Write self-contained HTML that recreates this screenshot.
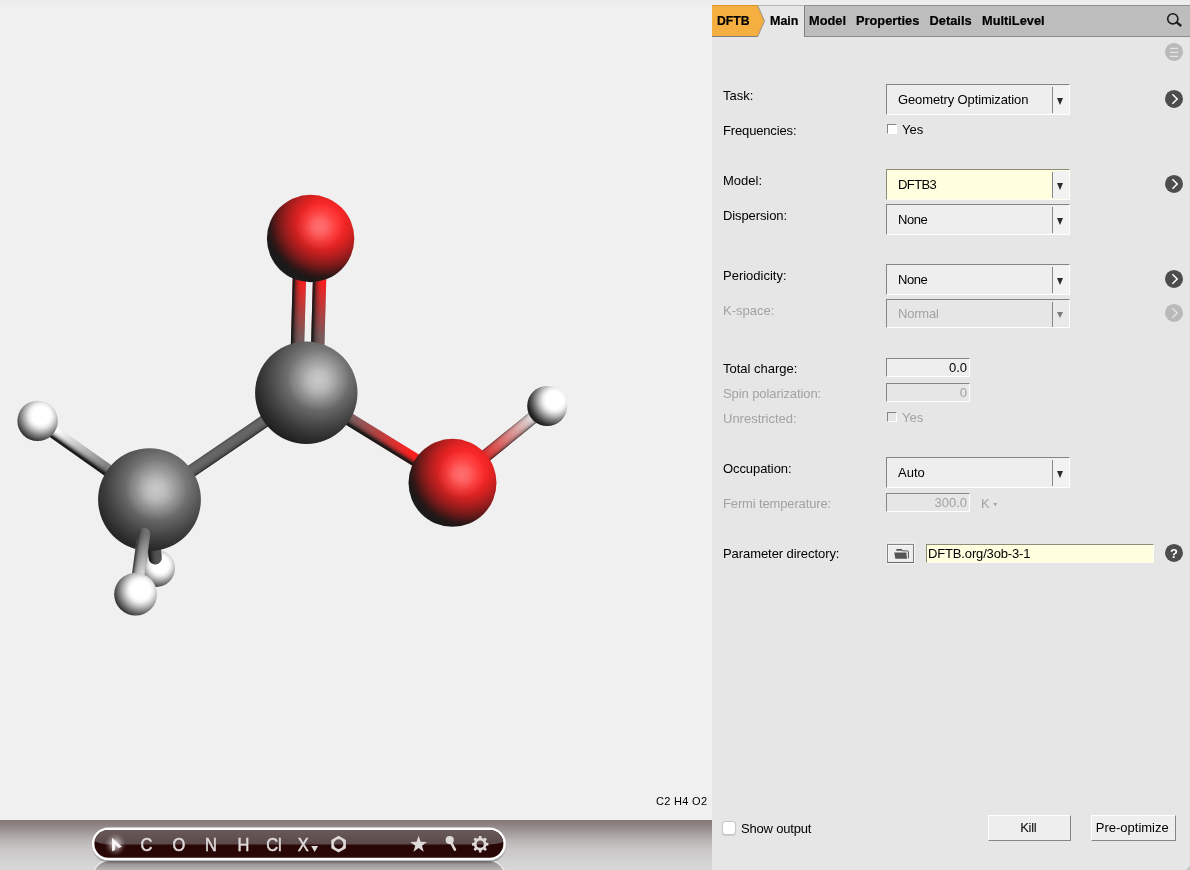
<!DOCTYPE html>
<html><head><meta charset="utf-8"><title>AMSinput</title>
<style>
*{box-sizing:border-box;margin:0;padding:0}
html,body{width:1190px;height:870px;overflow:hidden}
body{position:relative;background:#f0f0f0;font-family:"Liberation Sans",sans-serif;font-size:13px;color:#000;line-height:16px}
.abs,.abs *{position:absolute}
#left{will-change:transform;position:absolute;left:0;top:0;width:712px;height:870px;background:#f0f0f0}
#right{will-change:transform;position:absolute;left:712px;top:0;width:478px;height:870px;background:#e6e6e6}
#topband{position:absolute;left:0;top:0;width:478px;height:5px;background:#ecedec}
#tabbar{position:absolute;left:0;top:5px;width:478px;height:32px;background:#bdbdbd;border-top:1px solid #8e8e8e;border-bottom:1px solid #8a8a8a}
#tabmain{position:absolute;left:0;top:5px;width:93px;height:32px;background:#e6e6e6;border-right:1px solid #808080;border-top:1px solid #b6b6b6}
.tab{position:absolute;top:13px;font-weight:bold;-webkit-text-stroke:0.2px #000;font-size:12.3px;white-space:nowrap;line-height:16px}
.lbl{position:absolute;left:11px;white-space:nowrap;line-height:16px}
.dis{color:#a2a2a2}
.dd{position:absolute;left:174px;width:184px;height:31px;background:#eeeeee;border:1px solid;border-color:#858585 #fff #fff #858585}
.dd .t{position:absolute;left:11px;top:7px;white-space:nowrap}
.dd .sep{position:absolute;left:165px;top:2px;width:1px;height:26px;background:#858585}
.dd .bx{position:absolute;left:166px;top:1px;width:16px;height:28px;background:#f2f2f2}
.dd .ar{position:absolute;left:169.6px;top:13px;width:0;height:0;border-left:3.9px solid transparent;border-right:3.9px solid transparent;border-top:7px solid #2c2c2c}
.dd.y{background:#ffffdf;border-color:#8c8c78 #fffff2 #fffff2 #8c8c78}
.inp{position:absolute;left:174px;width:84px;height:19px;background:#eeeeee;border:1px solid;border-color:#858585 #fff #fff #858585;text-align:right;padding-right:2px;line-height:17px}
.cb{position:absolute;left:175px;width:10px;height:10px;background:#fff;border:1px solid;border-color:#858585 #fff #fff #858585}
.btn{position:absolute;top:815px;height:26px;background:#eeeeee;border:1px solid;border-color:#fff #858585 #858585 #fff;text-align:center;line-height:24px}
</style></head><body>
<div id="left">
<div style="position:absolute;left:0;top:0;width:712px;height:5px;background:#ecedec"></div>
<svg id="mol" width="712" height="820" viewBox="0 0 712 820" style="position:absolute;left:0;top:0"><defs><radialGradient id="sd1" gradientUnits="userSpaceOnUse" cx="160.1" cy="564.7" r="26.8"><stop offset="0.000" stop-color="#ffffff"/><stop offset="0.300" stop-color="#ffffff"/><stop offset="0.400" stop-color="#f0f0f0"/><stop offset="0.500" stop-color="#cecece"/><stop offset="0.600" stop-color="#a6a6a6"/><stop offset="0.690" stop-color="#808080"/><stop offset="0.790" stop-color="#585858"/><stop offset="0.870" stop-color="#383838"/><stop offset="0.960" stop-color="#1e1e1e"/><stop offset="1.000" stop-color="#1a1a1a"/></radialGradient><linearGradient id="bc1" gradientUnits="userSpaceOnUse" x1="149.50" y1="499.60" x2="155.30" y2="558.00"><stop offset="0.000" stop-color="#505050"/><stop offset="1.000" stop-color="#606060"/></linearGradient><linearGradient id="bs1" gradientUnits="userSpaceOnUse" x1="158.87" y1="528.16" x2="145.93" y2="529.44"><stop offset="0.000" stop-color="#1a1a1a" stop-opacity="0.290"/><stop offset="0.042" stop-color="#1a1a1a" stop-opacity="0.173"/><stop offset="0.083" stop-color="#1a1a1a" stop-opacity="0.168"/><stop offset="0.125" stop-color="#1a1a1a" stop-opacity="0.166"/><stop offset="0.167" stop-color="#1a1a1a" stop-opacity="0.166"/><stop offset="0.208" stop-color="#1a1a1a" stop-opacity="0.167"/><stop offset="0.250" stop-color="#1a1a1a" stop-opacity="0.169"/><stop offset="0.292" stop-color="#1a1a1a" stop-opacity="0.172"/><stop offset="0.333" stop-color="#1a1a1a" stop-opacity="0.175"/><stop offset="0.375" stop-color="#1a1a1a" stop-opacity="0.194"/><stop offset="0.417" stop-color="#1a1a1a" stop-opacity="0.219"/><stop offset="0.458" stop-color="#1a1a1a" stop-opacity="0.247"/><stop offset="0.500" stop-color="#1a1a1a" stop-opacity="0.278"/><stop offset="0.542" stop-color="#1a1a1a" stop-opacity="0.312"/><stop offset="0.583" stop-color="#1a1a1a" stop-opacity="0.358"/><stop offset="0.625" stop-color="#1a1a1a" stop-opacity="0.412"/><stop offset="0.667" stop-color="#1a1a1a" stop-opacity="0.469"/><stop offset="0.708" stop-color="#1a1a1a" stop-opacity="0.546"/><stop offset="0.750" stop-color="#1a1a1a" stop-opacity="0.636"/><stop offset="0.792" stop-color="#1a1a1a" stop-opacity="0.737"/><stop offset="0.833" stop-color="#1a1a1a" stop-opacity="0.854"/><stop offset="0.875" stop-color="#1a1a1a" stop-opacity="0.951"/><stop offset="0.917" stop-color="#1a1a1a" stop-opacity="1.000"/><stop offset="0.958" stop-color="#1a1a1a" stop-opacity="1.000"/><stop offset="1.000" stop-color="#1a1a1a" stop-opacity="1.000"/></linearGradient><linearGradient id="bc2" gradientUnits="userSpaceOnUse" x1="300.50" y1="238.22" x2="296.20" y2="392.52"><stop offset="0.280" stop-color="#ff2020"/><stop offset="0.640" stop-color="#7a5c5c"/></linearGradient><linearGradient id="bs2" gradientUnits="userSpaceOnUse" x1="307.20" y1="238.41" x2="293.81" y2="238.03"><stop offset="0.000" stop-color="#1a1a1a" stop-opacity="0.221"/><stop offset="0.042" stop-color="#1a1a1a" stop-opacity="0.062"/><stop offset="0.083" stop-color="#1a1a1a" stop-opacity="0.029"/><stop offset="0.125" stop-color="#1a1a1a" stop-opacity="0.026"/><stop offset="0.167" stop-color="#1a1a1a" stop-opacity="0.025"/><stop offset="0.208" stop-color="#1a1a1a" stop-opacity="0.025"/><stop offset="0.250" stop-color="#1a1a1a" stop-opacity="0.027"/><stop offset="0.292" stop-color="#1a1a1a" stop-opacity="0.029"/><stop offset="0.333" stop-color="#1a1a1a" stop-opacity="0.043"/><stop offset="0.375" stop-color="#1a1a1a" stop-opacity="0.065"/><stop offset="0.417" stop-color="#1a1a1a" stop-opacity="0.090"/><stop offset="0.458" stop-color="#1a1a1a" stop-opacity="0.119"/><stop offset="0.500" stop-color="#1a1a1a" stop-opacity="0.151"/><stop offset="0.542" stop-color="#1a1a1a" stop-opacity="0.186"/><stop offset="0.583" stop-color="#1a1a1a" stop-opacity="0.234"/><stop offset="0.625" stop-color="#1a1a1a" stop-opacity="0.291"/><stop offset="0.667" stop-color="#1a1a1a" stop-opacity="0.352"/><stop offset="0.708" stop-color="#1a1a1a" stop-opacity="0.426"/><stop offset="0.750" stop-color="#1a1a1a" stop-opacity="0.525"/><stop offset="0.792" stop-color="#1a1a1a" stop-opacity="0.634"/><stop offset="0.833" stop-color="#1a1a1a" stop-opacity="0.761"/><stop offset="0.875" stop-color="#1a1a1a" stop-opacity="0.906"/><stop offset="0.917" stop-color="#1a1a1a" stop-opacity="0.975"/><stop offset="0.958" stop-color="#1a1a1a" stop-opacity="1.000"/><stop offset="1.000" stop-color="#1a1a1a" stop-opacity="1.000"/></linearGradient><linearGradient id="bc3" gradientUnits="userSpaceOnUse" x1="320.70" y1="238.78" x2="316.40" y2="393.08"><stop offset="0.280" stop-color="#ff2020"/><stop offset="0.640" stop-color="#7a5c5c"/></linearGradient><linearGradient id="bs3" gradientUnits="userSpaceOnUse" x1="327.39" y1="238.97" x2="314.00" y2="238.59"><stop offset="0.000" stop-color="#1a1a1a" stop-opacity="0.221"/><stop offset="0.042" stop-color="#1a1a1a" stop-opacity="0.062"/><stop offset="0.083" stop-color="#1a1a1a" stop-opacity="0.029"/><stop offset="0.125" stop-color="#1a1a1a" stop-opacity="0.026"/><stop offset="0.167" stop-color="#1a1a1a" stop-opacity="0.025"/><stop offset="0.208" stop-color="#1a1a1a" stop-opacity="0.025"/><stop offset="0.250" stop-color="#1a1a1a" stop-opacity="0.027"/><stop offset="0.292" stop-color="#1a1a1a" stop-opacity="0.029"/><stop offset="0.333" stop-color="#1a1a1a" stop-opacity="0.043"/><stop offset="0.375" stop-color="#1a1a1a" stop-opacity="0.065"/><stop offset="0.417" stop-color="#1a1a1a" stop-opacity="0.090"/><stop offset="0.458" stop-color="#1a1a1a" stop-opacity="0.119"/><stop offset="0.500" stop-color="#1a1a1a" stop-opacity="0.151"/><stop offset="0.542" stop-color="#1a1a1a" stop-opacity="0.186"/><stop offset="0.583" stop-color="#1a1a1a" stop-opacity="0.234"/><stop offset="0.625" stop-color="#1a1a1a" stop-opacity="0.291"/><stop offset="0.667" stop-color="#1a1a1a" stop-opacity="0.352"/><stop offset="0.708" stop-color="#1a1a1a" stop-opacity="0.426"/><stop offset="0.750" stop-color="#1a1a1a" stop-opacity="0.525"/><stop offset="0.792" stop-color="#1a1a1a" stop-opacity="0.634"/><stop offset="0.833" stop-color="#1a1a1a" stop-opacity="0.761"/><stop offset="0.875" stop-color="#1a1a1a" stop-opacity="0.906"/><stop offset="0.917" stop-color="#1a1a1a" stop-opacity="0.975"/><stop offset="0.958" stop-color="#1a1a1a" stop-opacity="1.000"/><stop offset="1.000" stop-color="#1a1a1a" stop-opacity="1.000"/></linearGradient><linearGradient id="bc4" gradientUnits="userSpaceOnUse" x1="149.50" y1="499.60" x2="306.30" y2="392.80"><stop offset="0.000" stop-color="#727272"/><stop offset="1.000" stop-color="#727272"/></linearGradient><linearGradient id="bs4" gradientUnits="userSpaceOnUse" x1="145.95" y1="494.39" x2="153.05" y2="504.81"><stop offset="0.000" stop-color="#1a1a1a" stop-opacity="0.703"/><stop offset="0.042" stop-color="#1a1a1a" stop-opacity="0.379"/><stop offset="0.083" stop-color="#1a1a1a" stop-opacity="0.294"/><stop offset="0.125" stop-color="#1a1a1a" stop-opacity="0.237"/><stop offset="0.167" stop-color="#1a1a1a" stop-opacity="0.197"/><stop offset="0.208" stop-color="#1a1a1a" stop-opacity="0.175"/><stop offset="0.250" stop-color="#1a1a1a" stop-opacity="0.159"/><stop offset="0.292" stop-color="#1a1a1a" stop-opacity="0.148"/><stop offset="0.333" stop-color="#1a1a1a" stop-opacity="0.141"/><stop offset="0.375" stop-color="#1a1a1a" stop-opacity="0.138"/><stop offset="0.417" stop-color="#1a1a1a" stop-opacity="0.139"/><stop offset="0.458" stop-color="#1a1a1a" stop-opacity="0.143"/><stop offset="0.500" stop-color="#1a1a1a" stop-opacity="0.151"/><stop offset="0.542" stop-color="#1a1a1a" stop-opacity="0.162"/><stop offset="0.583" stop-color="#1a1a1a" stop-opacity="0.176"/><stop offset="0.625" stop-color="#1a1a1a" stop-opacity="0.193"/><stop offset="0.667" stop-color="#1a1a1a" stop-opacity="0.219"/><stop offset="0.708" stop-color="#1a1a1a" stop-opacity="0.253"/><stop offset="0.750" stop-color="#1a1a1a" stop-opacity="0.293"/><stop offset="0.792" stop-color="#1a1a1a" stop-opacity="0.339"/><stop offset="0.833" stop-color="#1a1a1a" stop-opacity="0.394"/><stop offset="0.875" stop-color="#1a1a1a" stop-opacity="0.481"/><stop offset="0.917" stop-color="#1a1a1a" stop-opacity="0.592"/><stop offset="0.958" stop-color="#1a1a1a" stop-opacity="0.748"/><stop offset="1.000" stop-color="#1a1a1a" stop-opacity="0.997"/></linearGradient><linearGradient id="bc5" gradientUnits="userSpaceOnUse" x1="306.30" y1="392.80" x2="452.50" y2="482.80"><stop offset="0.300" stop-color="#7d5f5f"/><stop offset="0.700" stop-color="#ff2020"/></linearGradient><linearGradient id="bs5" gradientUnits="userSpaceOnUse" x1="309.71" y1="387.26" x2="302.89" y2="398.34"><stop offset="0.000" stop-color="#1a1a1a" stop-opacity="0.048"/><stop offset="0.042" stop-color="#1a1a1a" stop-opacity="0.008"/><stop offset="0.083" stop-color="#1a1a1a" stop-opacity="0.004"/><stop offset="0.125" stop-color="#1a1a1a" stop-opacity="0.003"/><stop offset="0.167" stop-color="#1a1a1a" stop-opacity="0.005"/><stop offset="0.208" stop-color="#1a1a1a" stop-opacity="0.008"/><stop offset="0.250" stop-color="#1a1a1a" stop-opacity="0.012"/><stop offset="0.292" stop-color="#1a1a1a" stop-opacity="0.017"/><stop offset="0.333" stop-color="#1a1a1a" stop-opacity="0.022"/><stop offset="0.375" stop-color="#1a1a1a" stop-opacity="0.029"/><stop offset="0.417" stop-color="#1a1a1a" stop-opacity="0.062"/><stop offset="0.458" stop-color="#1a1a1a" stop-opacity="0.105"/><stop offset="0.500" stop-color="#1a1a1a" stop-opacity="0.151"/><stop offset="0.542" stop-color="#1a1a1a" stop-opacity="0.200"/><stop offset="0.583" stop-color="#1a1a1a" stop-opacity="0.272"/><stop offset="0.625" stop-color="#1a1a1a" stop-opacity="0.348"/><stop offset="0.667" stop-color="#1a1a1a" stop-opacity="0.438"/><stop offset="0.708" stop-color="#1a1a1a" stop-opacity="0.555"/><stop offset="0.750" stop-color="#1a1a1a" stop-opacity="0.682"/><stop offset="0.792" stop-color="#1a1a1a" stop-opacity="0.827"/><stop offset="0.833" stop-color="#1a1a1a" stop-opacity="0.943"/><stop offset="0.875" stop-color="#1a1a1a" stop-opacity="1.000"/><stop offset="0.917" stop-color="#1a1a1a" stop-opacity="1.000"/><stop offset="0.958" stop-color="#1a1a1a" stop-opacity="1.000"/><stop offset="1.000" stop-color="#1a1a1a" stop-opacity="1.000"/></linearGradient><linearGradient id="bc6" gradientUnits="userSpaceOnUse" x1="452.50" y1="482.80" x2="547.20" y2="406.00"><stop offset="0.300" stop-color="#ff2020"/><stop offset="0.850" stop-color="#ffffff"/></linearGradient><linearGradient id="bs6" gradientUnits="userSpaceOnUse" x1="448.56" y1="477.95" x2="456.44" y2="487.65"><stop offset="0.000" stop-color="#1a1a1a" stop-opacity="0.799"/><stop offset="0.042" stop-color="#1a1a1a" stop-opacity="0.453"/><stop offset="0.083" stop-color="#1a1a1a" stop-opacity="0.349"/><stop offset="0.125" stop-color="#1a1a1a" stop-opacity="0.287"/><stop offset="0.167" stop-color="#1a1a1a" stop-opacity="0.240"/><stop offset="0.208" stop-color="#1a1a1a" stop-opacity="0.204"/><stop offset="0.250" stop-color="#1a1a1a" stop-opacity="0.183"/><stop offset="0.292" stop-color="#1a1a1a" stop-opacity="0.168"/><stop offset="0.333" stop-color="#1a1a1a" stop-opacity="0.157"/><stop offset="0.375" stop-color="#1a1a1a" stop-opacity="0.151"/><stop offset="0.417" stop-color="#1a1a1a" stop-opacity="0.147"/><stop offset="0.458" stop-color="#1a1a1a" stop-opacity="0.147"/><stop offset="0.500" stop-color="#1a1a1a" stop-opacity="0.151"/><stop offset="0.542" stop-color="#1a1a1a" stop-opacity="0.158"/><stop offset="0.583" stop-color="#1a1a1a" stop-opacity="0.168"/><stop offset="0.625" stop-color="#1a1a1a" stop-opacity="0.181"/><stop offset="0.667" stop-color="#1a1a1a" stop-opacity="0.198"/><stop offset="0.708" stop-color="#1a1a1a" stop-opacity="0.226"/><stop offset="0.750" stop-color="#1a1a1a" stop-opacity="0.260"/><stop offset="0.792" stop-color="#1a1a1a" stop-opacity="0.301"/><stop offset="0.833" stop-color="#1a1a1a" stop-opacity="0.350"/><stop offset="0.875" stop-color="#1a1a1a" stop-opacity="0.415"/><stop offset="0.917" stop-color="#1a1a1a" stop-opacity="0.517"/><stop offset="0.958" stop-color="#1a1a1a" stop-opacity="0.659"/><stop offset="1.000" stop-color="#1a1a1a" stop-opacity="0.963"/></linearGradient><linearGradient id="bc7" gradientUnits="userSpaceOnUse" x1="37.60" y1="420.90" x2="149.50" y2="499.60"><stop offset="0.150" stop-color="#ffffff"/><stop offset="0.600" stop-color="#828282"/></linearGradient><linearGradient id="bs7" gradientUnits="userSpaceOnUse" x1="41.20" y1="415.79" x2="34.00" y2="426.01"><stop offset="0.000" stop-color="#1a1a1a" stop-opacity="0.040"/><stop offset="0.042" stop-color="#1a1a1a" stop-opacity="0.007"/><stop offset="0.083" stop-color="#1a1a1a" stop-opacity="0.003"/><stop offset="0.125" stop-color="#1a1a1a" stop-opacity="0.002"/><stop offset="0.167" stop-color="#1a1a1a" stop-opacity="0.004"/><stop offset="0.208" stop-color="#1a1a1a" stop-opacity="0.007"/><stop offset="0.250" stop-color="#1a1a1a" stop-opacity="0.011"/><stop offset="0.292" stop-color="#1a1a1a" stop-opacity="0.016"/><stop offset="0.333" stop-color="#1a1a1a" stop-opacity="0.022"/><stop offset="0.375" stop-color="#1a1a1a" stop-opacity="0.028"/><stop offset="0.417" stop-color="#1a1a1a" stop-opacity="0.061"/><stop offset="0.458" stop-color="#1a1a1a" stop-opacity="0.104"/><stop offset="0.500" stop-color="#1a1a1a" stop-opacity="0.151"/><stop offset="0.542" stop-color="#1a1a1a" stop-opacity="0.201"/><stop offset="0.583" stop-color="#1a1a1a" stop-opacity="0.273"/><stop offset="0.625" stop-color="#1a1a1a" stop-opacity="0.350"/><stop offset="0.667" stop-color="#1a1a1a" stop-opacity="0.443"/><stop offset="0.708" stop-color="#1a1a1a" stop-opacity="0.561"/><stop offset="0.750" stop-color="#1a1a1a" stop-opacity="0.689"/><stop offset="0.792" stop-color="#1a1a1a" stop-opacity="0.835"/><stop offset="0.833" stop-color="#1a1a1a" stop-opacity="0.946"/><stop offset="0.875" stop-color="#1a1a1a" stop-opacity="1.000"/><stop offset="0.917" stop-color="#1a1a1a" stop-opacity="1.000"/><stop offset="0.958" stop-color="#1a1a1a" stop-opacity="1.000"/><stop offset="1.000" stop-color="#1a1a1a" stop-opacity="1.000"/></linearGradient><radialGradient id="sd2" gradientUnits="userSpaceOnUse" cx="324.6" cy="221.5" r="65.6"><stop offset="0.000" stop-color="#ff2c2c"/><stop offset="0.200" stop-color="#fd2a2a"/><stop offset="0.300" stop-color="#f42626"/><stop offset="0.400" stop-color="#e02222"/><stop offset="0.480" stop-color="#c82020"/><stop offset="0.550" stop-color="#b01e1e"/><stop offset="0.620" stop-color="#961c1c"/><stop offset="0.680" stop-color="#7c1a1a"/><stop offset="0.740" stop-color="#601818"/><stop offset="0.790" stop-color="#441717"/><stop offset="0.840" stop-color="#2c1717"/><stop offset="0.890" stop-color="#1e1818"/><stop offset="0.940" stop-color="#1a1a1a"/><stop offset="1.000" stop-color="#1a1a1a"/></radialGradient><radialGradient id="sp2" gradientUnits="userSpaceOnUse" cx="319.8" cy="226.7" r="24.0"><stop offset="0" stop-color="#fff" stop-opacity="0.32"/><stop offset="0.3" stop-color="#fff" stop-opacity="0.26"/><stop offset="0.65" stop-color="#fff" stop-opacity="0.10"/><stop offset="1" stop-color="#fff" stop-opacity="0"/></radialGradient><radialGradient id="sd3" gradientUnits="userSpaceOnUse" cx="318.6" cy="376.4" r="79.9"><stop offset="0.000" stop-color="#8a8a8a"/><stop offset="0.220" stop-color="#858585"/><stop offset="0.350" stop-color="#767676"/><stop offset="0.440" stop-color="#666666"/><stop offset="0.520" stop-color="#585858"/><stop offset="0.620" stop-color="#464646"/><stop offset="0.720" stop-color="#363636"/><stop offset="0.800" stop-color="#2a2a2a"/><stop offset="0.880" stop-color="#202020"/><stop offset="1.000" stop-color="#1a1a1a"/></radialGradient><radialGradient id="sp3" gradientUnits="userSpaceOnUse" cx="318.6" cy="380.0" r="30.7"><stop offset="0" stop-color="#fff" stop-opacity="0.55"/><stop offset="0.3" stop-color="#fff" stop-opacity="0.44"/><stop offset="0.65" stop-color="#fff" stop-opacity="0.17"/><stop offset="1" stop-color="#fff" stop-opacity="0"/></radialGradient><radialGradient id="sd4" gradientUnits="userSpaceOnUse" cx="158.8" cy="485.2" r="80.2"><stop offset="0.000" stop-color="#8a8a8a"/><stop offset="0.220" stop-color="#858585"/><stop offset="0.350" stop-color="#767676"/><stop offset="0.440" stop-color="#666666"/><stop offset="0.520" stop-color="#585858"/><stop offset="0.620" stop-color="#464646"/><stop offset="0.720" stop-color="#363636"/><stop offset="0.800" stop-color="#2a2a2a"/><stop offset="0.880" stop-color="#202020"/><stop offset="1.000" stop-color="#1a1a1a"/></radialGradient><radialGradient id="sp4" gradientUnits="userSpaceOnUse" cx="156.2" cy="489.8" r="30.8"><stop offset="0" stop-color="#fff" stop-opacity="0.55"/><stop offset="0.3" stop-color="#fff" stop-opacity="0.44"/><stop offset="0.65" stop-color="#fff" stop-opacity="0.17"/><stop offset="1" stop-color="#fff" stop-opacity="0"/></radialGradient><radialGradient id="sd5" gradientUnits="userSpaceOnUse" cx="466.6" cy="468.3" r="66.0"><stop offset="0.000" stop-color="#ff2c2c"/><stop offset="0.200" stop-color="#fd2a2a"/><stop offset="0.300" stop-color="#f42626"/><stop offset="0.400" stop-color="#e02222"/><stop offset="0.480" stop-color="#c82020"/><stop offset="0.550" stop-color="#b01e1e"/><stop offset="0.620" stop-color="#961c1c"/><stop offset="0.680" stop-color="#7c1a1a"/><stop offset="0.740" stop-color="#601818"/><stop offset="0.790" stop-color="#441717"/><stop offset="0.840" stop-color="#2c1717"/><stop offset="0.890" stop-color="#1e1818"/><stop offset="0.940" stop-color="#1a1a1a"/><stop offset="1.000" stop-color="#1a1a1a"/></radialGradient><radialGradient id="sp5" gradientUnits="userSpaceOnUse" cx="461.7" cy="474.4" r="24.2"><stop offset="0" stop-color="#fff" stop-opacity="0.32"/><stop offset="0.3" stop-color="#fff" stop-opacity="0.26"/><stop offset="0.65" stop-color="#fff" stop-opacity="0.10"/><stop offset="1" stop-color="#fff" stop-opacity="0"/></radialGradient><radialGradient id="sd6" gradientUnits="userSpaceOnUse" cx="554.8" cy="400.0" r="29.0"><stop offset="0.000" stop-color="#ffffff"/><stop offset="0.300" stop-color="#ffffff"/><stop offset="0.400" stop-color="#f0f0f0"/><stop offset="0.500" stop-color="#cecece"/><stop offset="0.600" stop-color="#a6a6a6"/><stop offset="0.690" stop-color="#808080"/><stop offset="0.790" stop-color="#585858"/><stop offset="0.870" stop-color="#383838"/><stop offset="0.960" stop-color="#1e1e1e"/><stop offset="1.000" stop-color="#1a1a1a"/></radialGradient><radialGradient id="sd7" gradientUnits="userSpaceOnUse" cx="41.0" cy="415.4" r="29.3"><stop offset="0.000" stop-color="#ffffff"/><stop offset="0.300" stop-color="#ffffff"/><stop offset="0.400" stop-color="#f0f0f0"/><stop offset="0.500" stop-color="#cecece"/><stop offset="0.600" stop-color="#a6a6a6"/><stop offset="0.690" stop-color="#808080"/><stop offset="0.790" stop-color="#585858"/><stop offset="0.870" stop-color="#383838"/><stop offset="0.960" stop-color="#1e1e1e"/><stop offset="1.000" stop-color="#1a1a1a"/></radialGradient><linearGradient id="bc8" gradientUnits="userSpaceOnUse" x1="143.90" y1="534.00" x2="135.60" y2="594.20"><stop offset="0.000" stop-color="#767676"/><stop offset="0.800" stop-color="#f0f0f0"/></linearGradient><linearGradient id="bs8" gradientUnits="userSpaceOnUse" x1="150.24" y1="534.87" x2="137.56" y2="533.13"><stop offset="0.000" stop-color="#1a1a1a" stop-opacity="0.216"/><stop offset="0.042" stop-color="#1a1a1a" stop-opacity="0.080"/><stop offset="0.083" stop-color="#1a1a1a" stop-opacity="0.048"/><stop offset="0.125" stop-color="#1a1a1a" stop-opacity="0.032"/><stop offset="0.167" stop-color="#1a1a1a" stop-opacity="0.025"/><stop offset="0.208" stop-color="#1a1a1a" stop-opacity="0.024"/><stop offset="0.250" stop-color="#1a1a1a" stop-opacity="0.027"/><stop offset="0.292" stop-color="#1a1a1a" stop-opacity="0.034"/><stop offset="0.333" stop-color="#1a1a1a" stop-opacity="0.045"/><stop offset="0.375" stop-color="#1a1a1a" stop-opacity="0.058"/><stop offset="0.417" stop-color="#1a1a1a" stop-opacity="0.074"/><stop offset="0.458" stop-color="#1a1a1a" stop-opacity="0.092"/><stop offset="0.500" stop-color="#1a1a1a" stop-opacity="0.113"/><stop offset="0.542" stop-color="#1a1a1a" stop-opacity="0.137"/><stop offset="0.583" stop-color="#1a1a1a" stop-opacity="0.167"/><stop offset="0.625" stop-color="#1a1a1a" stop-opacity="0.205"/><stop offset="0.667" stop-color="#1a1a1a" stop-opacity="0.248"/><stop offset="0.708" stop-color="#1a1a1a" stop-opacity="0.294"/><stop offset="0.750" stop-color="#1a1a1a" stop-opacity="0.360"/><stop offset="0.792" stop-color="#1a1a1a" stop-opacity="0.436"/><stop offset="0.833" stop-color="#1a1a1a" stop-opacity="0.522"/><stop offset="0.875" stop-color="#1a1a1a" stop-opacity="0.625"/><stop offset="0.917" stop-color="#1a1a1a" stop-opacity="0.709"/><stop offset="0.958" stop-color="#1a1a1a" stop-opacity="0.750"/><stop offset="1.000" stop-color="#1a1a1a" stop-opacity="0.750"/></linearGradient><radialGradient id="sd8" gradientUnits="userSpaceOnUse" cx="140.7" cy="589.9" r="31.0"><stop offset="0.000" stop-color="#ffffff"/><stop offset="0.300" stop-color="#ffffff"/><stop offset="0.400" stop-color="#f0f0f0"/><stop offset="0.500" stop-color="#cecece"/><stop offset="0.600" stop-color="#a6a6a6"/><stop offset="0.690" stop-color="#808080"/><stop offset="0.790" stop-color="#585858"/><stop offset="0.870" stop-color="#383838"/><stop offset="0.960" stop-color="#1e1e1e"/><stop offset="1.000" stop-color="#1a1a1a"/></radialGradient></defs><circle cx="156.4" cy="568.4" r="18.5" fill="url(#sd1)"/><path d="M145.93,529.44 L148.83,558.64 A6.50,6.50 0 0 0 161.77,557.36 L158.87,528.16 Z" fill="url(#bc1)"/><path d="M145.93,529.44 L148.83,558.64 A6.50,6.50 0 0 0 161.77,557.36 L158.87,528.16 Z" fill="url(#bs1)"/><path d="M293.81,238.03 L289.51,392.33 L302.90,392.71 L307.20,238.41 Z" fill="url(#bc2)"/><path d="M293.81,238.03 L289.51,392.33 L302.90,392.71 L307.20,238.41 Z" fill="url(#bs2)"/><path d="M314.00,238.59 L309.70,392.89 L323.09,393.27 L327.39,238.97 Z" fill="url(#bc3)"/><path d="M314.00,238.59 L309.70,392.89 L323.09,393.27 L327.39,238.97 Z" fill="url(#bs3)"/><path d="M153.05,504.81 L309.85,398.01 L302.75,387.59 L145.95,494.39 Z" fill="url(#bc4)"/><path d="M153.05,504.81 L309.85,398.01 L302.75,387.59 L145.95,494.39 Z" fill="url(#bs4)"/><path d="M302.89,398.34 L449.09,488.34 L455.91,477.26 L309.71,387.26 Z" fill="url(#bc5)"/><path d="M302.89,398.34 L449.09,488.34 L455.91,477.26 L309.71,387.26 Z" fill="url(#bs5)"/><path d="M456.44,487.65 L551.14,410.85 L543.26,401.15 L448.56,477.95 Z" fill="url(#bc6)"/><path d="M456.44,487.65 L551.14,410.85 L543.26,401.15 L448.56,477.95 Z" fill="url(#bs6)"/><path d="M34.00,426.01 L145.90,504.71 L153.10,494.49 L41.20,415.79 Z" fill="url(#bc7)"/><path d="M34.00,426.01 L145.90,504.71 L153.10,494.49 L41.20,415.79 Z" fill="url(#bs7)"/><circle cx="310.6" cy="238.5" r="43.7" fill="url(#sd2)"/><circle cx="310.6" cy="238.5" r="43.7" fill="url(#sp2)"/><circle cx="306.3" cy="392.8" r="51.2" fill="url(#sd3)"/><circle cx="306.3" cy="392.8" r="51.2" fill="url(#sp3)"/><circle cx="149.5" cy="499.6" r="51.4" fill="url(#sd4)"/><circle cx="149.5" cy="499.6" r="51.4" fill="url(#sp4)"/><circle cx="452.5" cy="482.8" r="44.0" fill="url(#sd5)"/><circle cx="452.5" cy="482.8" r="44.0" fill="url(#sp5)"/><circle cx="547.2" cy="406.0" r="20.0" fill="url(#sd6)"/><circle cx="37.6" cy="420.9" r="20.2" fill="url(#sd7)"/><path d="M137.56,533.13 L130.09,587.31 L142.77,589.05 L150.24,534.87 A6.40,6.40 0 0 0 137.56,533.13 Z" fill="url(#bc8)"/><path d="M137.56,533.13 L130.09,587.31 L142.77,589.05 L150.24,534.87 A6.40,6.40 0 0 0 137.56,533.13 Z" fill="url(#bs8)"/><circle cx="135.6" cy="594.2" r="21.4" fill="url(#sd8)"/></svg>
<div id="formula" style="position:absolute;left:656px;top:795px;font-size:11px;line-height:13px;letter-spacing:0.3px;white-space:nowrap">C2 H4 O2</div>
<div id="strip" style="position:absolute;left:0;top:820px;width:712px;height:50px;background:linear-gradient(#827575 0%,#9b9393 20%,#b8b4b4 40%,#c9c7c7 60%,#d2d1d1 80%,#d9d8d8 100%)"></div>
<svg id="tb" width="712" height="50" viewBox="0 820 712 50" style="position:absolute;left:0;top:820px">
<defs>
<linearGradient id="gl" x1="0" y1="0" x2="0" y2="1"><stop offset="0" stop-color="#6b5b5b"/><stop offset="1" stop-color="#5b4949"/></linearGradient>
<radialGradient id="glow"><stop offset="0" stop-color="#fff" stop-opacity="0.8"/><stop offset="0.3" stop-color="#fff" stop-opacity="0.55"/><stop offset="0.6" stop-color="#fff" stop-opacity="0.22"/><stop offset="0.85" stop-color="#fff" stop-opacity="0.05"/><stop offset="1" stop-color="#fff" stop-opacity="0"/></radialGradient>
<clipPath id="pin"><rect x="94.4" y="829.9" width="409" height="27.9" rx="13.95"/></clipPath>
<filter id="sh" x="-5%" y="-50%" width="110%" height="200%"><feGaussianBlur stdDeviation="1.1"/></filter>
<linearGradient id="rf" x1="0" y1="862" x2="0" y2="872" gradientUnits="userSpaceOnUse"><stop offset="0" stop-color="#fff" stop-opacity="0.55"/><stop offset="1" stop-color="#fff" stop-opacity="0.25"/></linearGradient>
<linearGradient id="rf2" x1="0" y1="862" x2="0" y2="872" gradientUnits="userSpaceOnUse"><stop offset="0" stop-color="#8c8686"/><stop offset="0.3" stop-color="#a29c9c"/><stop offset="0.6" stop-color="#b0acac"/><stop offset="1" stop-color="#b8b5b5"/></linearGradient>
</defs>
<rect x="92.8" y="860.4" width="412.4" height="33" rx="16.5" fill="url(#rf2)" stroke="#f4f4f4" stroke-opacity="0.75" stroke-width="1.6"/>
<rect x="93.5" y="830" width="411" height="31.6" rx="15.8" fill="#000" opacity="0.6" filter="url(#sh)"/>
<rect x="91.9" y="827.4" width="414" height="33" rx="16.5" fill="#fff"/>
<rect x="94.4" y="829.9" width="409" height="27.9" rx="13.95" fill="#2a0707"/>
<path clip-path="url(#pin)" d="M90,828 H510 V837.5 C504,843 496,844.5 488,844.5 H110 C102,844.5 96,843 90,837.5 Z" fill="url(#gl)"/>
<ellipse cx="115.3" cy="844.5" rx="11" ry="12" fill="url(#glow)" clip-path="url(#pin)"/>
<path d="M112,837.7 L121.9,846.7 L118.8,848.1 L115.2,844.7 L115,850.1 L112,851.2 Z" fill="#f6f4f4"/>
<text transform="translate(146.5,851) scale(0.9,1)" text-anchor="middle" font-family="Liberation Sans, sans-serif" font-size="18.3" fill="#dedada" stroke="#dedada" stroke-width="0.5">C</text>
<text transform="translate(179.0,851) scale(0.9,1)" text-anchor="middle" font-family="Liberation Sans, sans-serif" font-size="18.3" fill="#dedada" stroke="#dedada" stroke-width="0.5">O</text>
<text transform="translate(211.0,851) scale(0.9,1)" text-anchor="middle" font-family="Liberation Sans, sans-serif" font-size="18.3" fill="#dedada" stroke="#dedada" stroke-width="0.5">N</text>
<text transform="translate(243.5,851) scale(0.9,1)" text-anchor="middle" font-family="Liberation Sans, sans-serif" font-size="18.3" fill="#dedada" stroke="#dedada" stroke-width="0.5">H</text>
<text transform="translate(274.0,851) scale(0.9,1)" text-anchor="middle" font-family="Liberation Sans, sans-serif" font-size="18.3" fill="#dedada" stroke="#dedada" stroke-width="0.5">Cl</text>
<text transform="translate(303.2,851) scale(0.9,1)" text-anchor="middle" font-family="Liberation Sans, sans-serif" font-size="18.3" fill="#dedada" stroke="#dedada" stroke-width="0.5">X</text>
<path d="M311.2,846.1 H318.1 L314.65,852 Z" fill="#dedada"/>
<path fill-rule="evenodd" d="M338.60,835.70 L345.87,839.90 L345.87,848.30 L338.60,852.50 L331.33,848.30 L331.33,839.90 Z M343.4,844.1 a4.8,4.8 0 1 0 -9.6,0 a4.8,4.8 0 1 0 9.6,0 Z" fill="#dedada"/>
<polygon points="418.60,835.80 420.66,841.77 426.97,841.88 421.93,845.68 423.77,851.72 418.60,848.10 413.43,851.72 415.27,845.68 410.23,841.88 416.54,841.77" fill="#dedada"/>
<circle cx="449.7" cy="840.1" r="4.1" fill="#dedada"/>
<line x1="450.5" y1="841.5" x2="454.9" y2="849.6" stroke="#dedada" stroke-width="2.6" stroke-linecap="round"/>
<path fill-rule="evenodd" d="M486.33,842.73 L488.41,842.96 L488.41,845.44 L486.33,845.67 L485.57,847.50 L486.88,849.13 L485.13,850.88 L483.50,849.57 L481.67,850.33 L481.44,852.41 L478.96,852.41 L478.73,850.33 L476.90,849.57 L475.27,850.88 L473.52,849.13 L474.83,847.50 L474.07,845.67 L471.99,845.44 L471.99,842.96 L474.07,842.73 L474.83,840.90 L473.52,839.27 L475.27,837.52 L476.90,838.83 L478.73,838.07 L478.96,835.99 L481.44,835.99 L481.67,838.07 L483.50,838.83 L485.13,837.52 L486.88,839.27 L485.57,840.90 Z M483.8,844.2 a3.6,3.6 0 1 0 -7.2,0 a3.6,3.6 0 1 0 7.2,0 Z" fill="#dedada"/>
</svg>
</div>
<div id="right">
<div id="topband"></div>
<div id="tabbar"></div>
<div id="tabmain"></div>
<svg width="60" height="32" style="position:absolute;left:0;top:5px"><path d="M0 0H45.6L52.7 16L45.6 32H0Z" fill="#f5af41"/><path d="M0 0.5H45.6" stroke="#dc9324" stroke-width="1" fill="none"/><path d="M45.6 0.3L52.4 16L45.6 31.7" stroke="#8f8f8f" stroke-width="0.9" fill="none"/><path d="M0 31.5H45.8" stroke="#7e7e7e" stroke-width="1" fill="none"/></svg>
<div class="tab" style="left:5px;font-size:12.2px">DFTB</div>
<div class="tab" style="left:58px;font-size:12.5px">Main</div>
<div class="tab" style="left:97px;font-size:12.8px">Model</div>
<div class="tab" style="left:144px;font-size:12.8px">Properties</div>
<div class="tab" style="left:217.6px;font-size:12.8px">Details</div>
<div class="tab" style="left:270px;font-size:12.8px">MultiLevel</div>

<div class="lbl" style="top:88px">Task:</div>
<div class="dd" style="top:84px"><div class="t" style="letter-spacing:-0.125px">Geometry Optimization</div><div class="bx"></div><div class="sep"></div><div class="ar"></div></div>
<div class="lbl" style="top:123px;letter-spacing:-0.15px">Frequencies:</div>
<div class="cb" style="top:124px"></div><div class="lbl" style="left:190px;top:122px">Yes</div>

<div class="lbl" style="top:173px">Model:</div>
<div class="dd y" style="top:169px"><div class="t" style="letter-spacing:-0.6px">DFTB3</div><div class="bx"></div><div class="sep"></div><div class="ar"></div></div>
<div class="lbl" style="top:208px;letter-spacing:-0.1px">Dispersion:</div>
<div class="dd" style="top:204px"><div class="t" style="letter-spacing:-0.45px">None</div><div class="bx"></div><div class="sep"></div><div class="ar"></div></div>

<div class="lbl" style="top:268px">Periodicity:</div>
<div class="dd" style="top:264px"><div class="t" style="letter-spacing:-0.45px">None</div><div class="bx"></div><div class="sep"></div><div class="ar"></div></div>
<div class="lbl dis" style="top:303px">K-space:</div>
<div class="dd" style="top:299px;height:29px;background:#e6e6e6"><div class="t dis" style="letter-spacing:-0.2px;top:6px">Normal</div><div class="bx" style="height:26px;background:#e9e9e9"></div><div class="sep" style="height:25px"></div><div class="ar" style="border-top-color:#7c7c7c;top:12px;border-top-width:6px"></div></div>

<div class="lbl" style="top:361px">Total charge:</div>
<div class="inp" style="top:358px">0.0</div>
<div class="lbl dis" style="top:386px;letter-spacing:-0.09px">Spin polarization:</div>
<div class="inp dis" style="top:383px;background:#e6e6e6">0</div>
<div class="lbl dis" style="top:411px">Unrestricted:</div>
<div class="cb" style="top:412px;background:#e6e6e6"></div><div class="lbl dis" style="left:190px;top:410px">Yes</div>

<div class="lbl" style="top:461px;letter-spacing:-0.08px">Occupation:</div>
<div class="dd" style="top:457px"><div class="t">Auto</div><div class="bx"></div><div class="sep"></div><div class="ar"></div></div>
<div class="lbl dis" style="top:496px;letter-spacing:-0.14px">Fermi temperature:</div>
<div class="inp dis" style="top:493px;background:#e6e6e6">300.0</div>
<div class="lbl dis" style="left:269px;top:496px">K</div>

<div class="lbl" style="top:546px;letter-spacing:-0.07px">Parameter directory:</div>
<div class="inp" style="left:214px;top:544px;width:228px;background:#ffffdf;border-color:#8c8c78 #fffff2 #fffff2 #8c8c78;text-align:left;padding-left:1px;letter-spacing:-0.15px">DFTB.org/3ob-3-1</div>


<svg width="478" height="870" viewBox="712 0 478 870" style="position:absolute;left:0;top:0;pointer-events:none">
<circle cx="1172.8" cy="18.8" r="5.1" fill="none" stroke="#1c1c1c" stroke-width="1.6"/>
<line x1="1176.7" y1="22.3" x2="1181.2" y2="26" stroke="#1c1c1c" stroke-width="2.3" stroke-linecap="butt"/>
<circle cx="1174" cy="51.9" r="9" fill="#b9b9b9"/>
<path d="M1170,48.4H1178M1170,52.4H1178M1170,56.4H1178" stroke="#e4e4e4" stroke-width="1.2"/>
<g id="arr"><circle cx="1174" cy="98.9" r="9" fill="#4d4d4d"/><path d="M1172.4,94.2L1177.2,99L1172.4,103.8" fill="none" stroke="#fff" stroke-width="1.5"/></g>
<g transform="translate(0,85)"><circle cx="1174" cy="98.9" r="9" fill="#4d4d4d"/><path d="M1172.4,94.2L1177.2,99L1172.4,103.8" fill="none" stroke="#fff" stroke-width="1.5"/></g>
<g transform="translate(0,180)"><circle cx="1174" cy="98.9" r="9" fill="#4d4d4d"/><path d="M1172.4,94.2L1177.2,99L1172.4,103.8" fill="none" stroke="#fff" stroke-width="1.5"/></g>
<g transform="translate(0,214)"><circle cx="1174" cy="98.9" r="9" fill="#b9b9b9"/><path d="M1172.4,94.2L1177.2,99L1172.4,103.8" fill="none" stroke="#e2e2e2" stroke-width="1.5"/></g>
<circle cx="1174" cy="552.9" r="9" fill="#4d4d4d"/>
<text x="1174" y="557.6" text-anchor="middle" font-family="Liberation Sans, sans-serif" font-weight="bold" font-size="13" fill="#fff">?</text>
<path d="M993.3,503h3.9l-1.95,3.5z" fill="#a2a2a2"/>
<path d="M1186,870L1190,866V870Z" fill="#c4c4c4"/>
</svg>
<div id="fbtn" style="position:absolute;left:174px;top:542px;width:29px;height:22px;border:1px solid;border-color:#ededed #f8f8f8 #f8f8f8 #ededed"><div style="position:absolute;left:0;top:1px;width:27px;height:19px;border:1px solid;border-color:#868686 #7c7c7c #666 #868686;background:#eeeeee;box-shadow:inset 1px 1px 0 #f8f8f8"></div>
<svg width="16" height="11" viewBox="0 0 16 11" style="position:absolute;left:7px;top:5.5px"><path d="M2.6,0.6h5l0.8,1.3h5.2c0.5,0,0.8,0.3,0.8,0.8V9.3" fill="none" stroke="#555" stroke-width="1"/><path d="M2.4,0.3h5.4l0.6,1.4H2.4z" fill="#555"/><path d="M0.2,3.6H12.3L13,9.8H1.4Z" fill="#555"/></svg></div>
<div id="socb" style="position:absolute;left:10px;top:821px;width:14px;height:14px;border:1px solid #c6c6c6;border-radius:3.5px;background:#fff;box-shadow:0 0.5px 1px rgba(0,0,0,0.12)"></div>
<div class="lbl" style="left:29px;top:821px;letter-spacing:-0.18px">Show output</div>
<div class="btn" style="left:276px;width:83px;letter-spacing:-0.3px;text-indent:-2.5px">Kill</div>
<div class="btn" style="left:379px;width:85px;text-indent:-2.5px">Pre-optimize</div>
</div>
</body></html>
